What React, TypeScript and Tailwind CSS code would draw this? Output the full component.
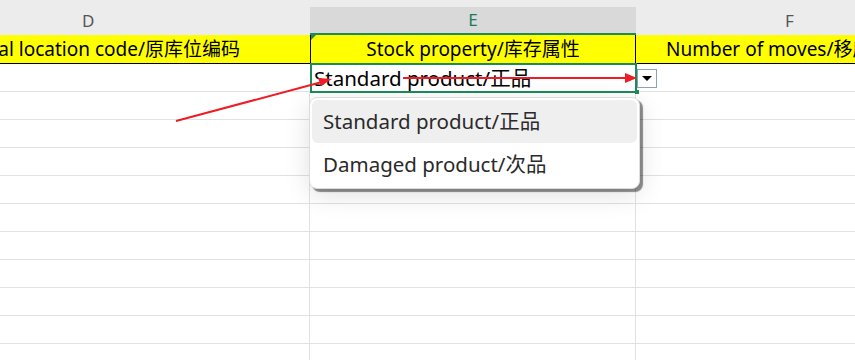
import React from "react";

const FONT = { fontFamily: '"Noto Sans", "Noto Sans CJK SC", sans-serif' };

function BodyRow() {
  return (
    <div className="flex h-[28px] border-b border-[#e1e1e1]">
      <div className="w-[310px] border-r border-[#e1e1e1]" />
      <div className="w-[326px] border-r border-[#e1e1e1]" />
      <div className="flex-1" />
    </div>
  );
}

export default function App() {
  return (
    <div className="relative h-[360px] w-[855px] overflow-hidden bg-white text-black" style={FONT}>
      {/* column letters */}
      <div className="h-[7px] bg-[#ececec]" />
      <div className="flex h-[28px] text-[17px]">
        <div className="flex w-[310px] items-center bg-[#ececec] pl-[82px] text-[#555]">D</div>
        <div className="flex w-[326px] items-center justify-center border-b-2 border-[#1d8a5b] bg-[#d9d9d9] text-[#1d7a58]">E</div>
        <div className="flex flex-1 items-center bg-[#ececec] pl-[149px] text-[#555]">F</div>
      </div>

      {/* header row */}
      <div className="flex h-[29px] border-b border-black bg-[#ffff00] text-[19px] leading-none">
        <div className="flex w-[310px] items-center justify-end overflow-hidden whitespace-nowrap pr-[70px]">
          Original location code/原库位编码
        </div>
        <div className="relative flex w-[326px] items-center justify-center border-x border-black">
          <span className="absolute left-0 top-0 h-0 w-0 border-r-[5px] border-t-[5px] border-r-transparent border-t-[#1d8a5b]" />
          Stock property/库存属性
        </div>
        <div className="flex flex-1 items-center overflow-hidden whitespace-nowrap pl-[30px]">
          Number of moves/移库数量
        </div>
      </div>

      {/* selected row */}
      <div className="flex h-[28px] border-b border-[#e1e1e1]">
        <div className="w-[310px]" />
        <div className="relative w-[326px]">
          <div className="absolute -top-[1px] left-0 h-[30px] w-[327px] border-2 border-[#1d8a5b]" />
          <div className="absolute bottom-[-3px] right-[-3px] h-[4px] w-[4px] bg-[#1d8a5b]" />
          <div className="flex h-full items-center pl-[4px] pt-[1px] text-[20.5px] leading-none">
            Standard product/正品
          </div>
        </div>
        <div className="flex-1" />
      </div>

      {Array.from({ length: 10 }).map((_, i) => (
        <BodyRow key={i} />
      ))}

      {/* dropdown button */}
      <div className="absolute left-[637px] top-[69px] flex h-[19px] w-[20px] items-center justify-center border border-[#8ea2b6] bg-white">
        <span className="h-0 w-0 border-x-[5px] border-t-[5px] border-x-transparent border-t-black" />
      </div>

      {/* dropdown list */}
      <div className="absolute left-[309px] top-[97px] w-[331px] rounded-lg border border-[#dcdcdc] bg-white p-[2px] shadow-[3px_3px_1px_rgba(0,0,0,0.45),0_6px_26px_rgba(0,0,0,0.12)]">
        <div className="flex h-[43px] items-center rounded-md bg-[#efefef] px-[11px] text-[20.5px] text-[#2a2a2a]">
          Standard product/正品
        </div>
        <div className="flex h-[43px] items-center px-[11px] text-[20.5px] text-[#2a2a2a]">
          Damaged product/次品
        </div>
      </div>

      {/* annotation arrows */}
      <svg className="pointer-events-none absolute left-0 top-0" width="855" height="360">
        <line x1="176" y1="121" x2="322" y2="82" stroke="#ee1c25" strokeWidth="2" />
        <polygon points="332,79 318,78 321,86" fill="#ee1c25" />
        <line x1="403" y1="78" x2="626" y2="78" stroke="#ee1c25" strokeWidth="2" />
        <polygon points="637,78 625,73 625,83" fill="#ee1c25" />
      </svg>
    </div>
  );
}
